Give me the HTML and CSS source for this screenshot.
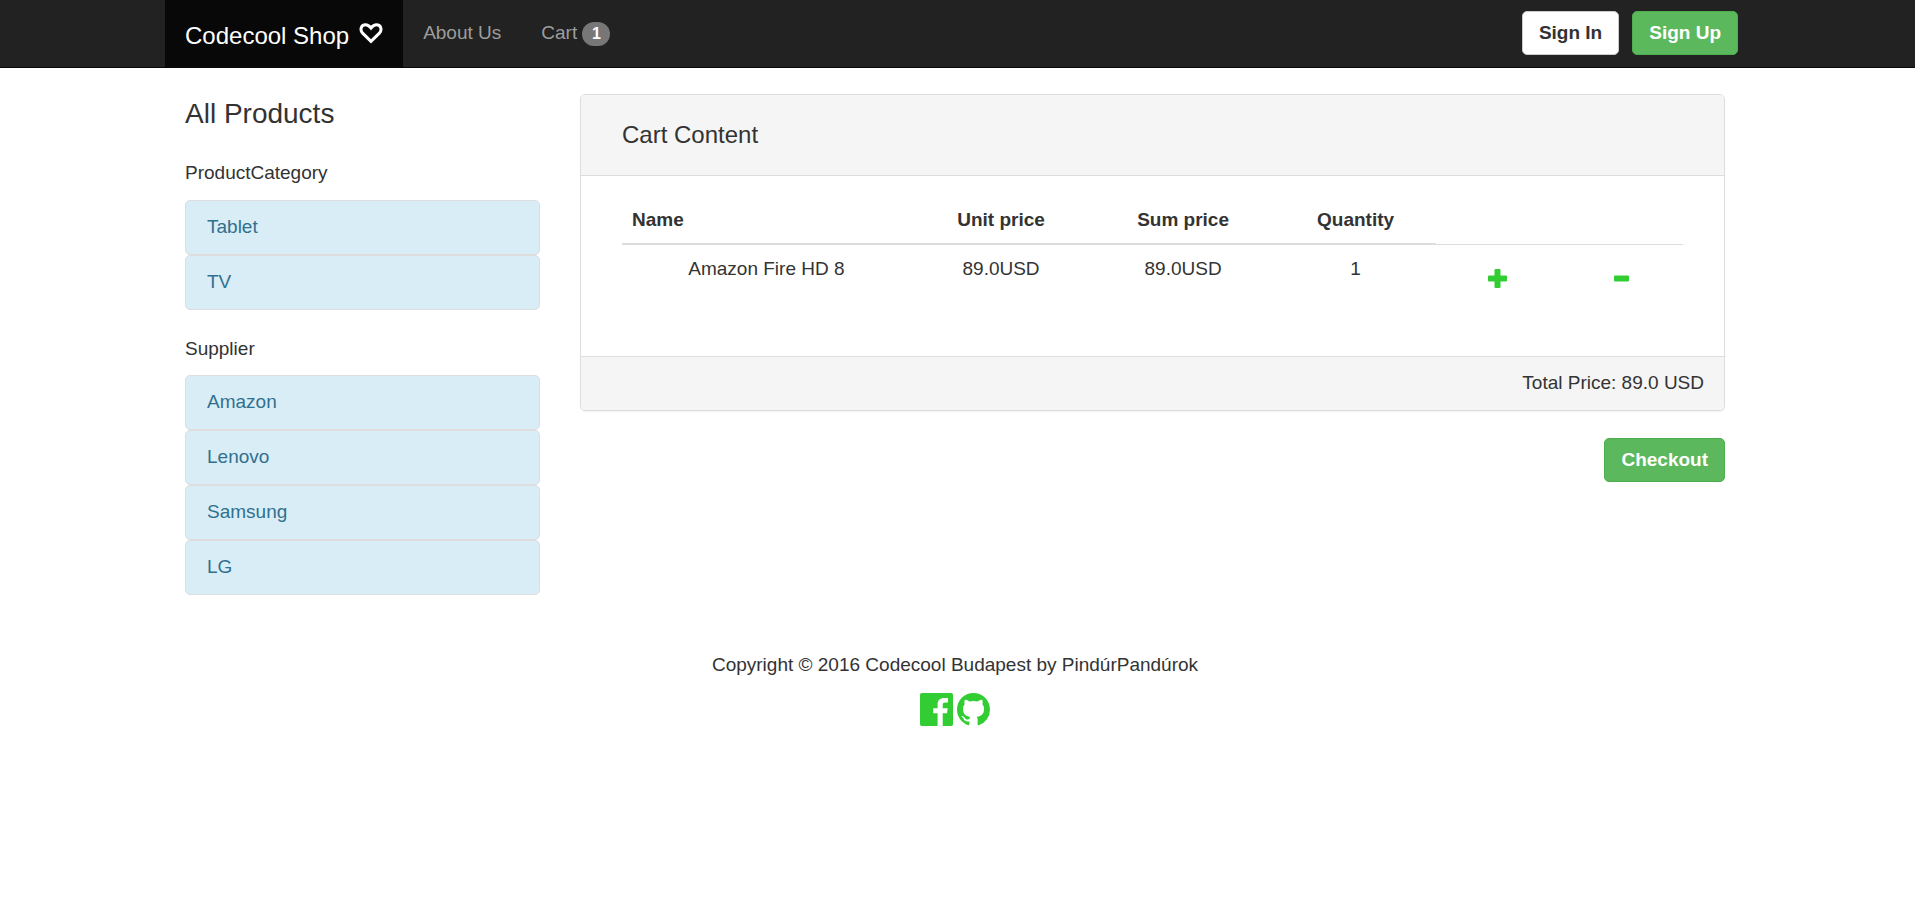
FILE: index.html
```html
<!DOCTYPE html>
<html lang="en">
<head>
<meta charset="utf-8">
<meta name="viewport" content="width=device-width, initial-scale=1">
<title>Codecool Shop</title>
<link rel="stylesheet" href="styles.css">
</head>
<body>
<header class="navbar">
  <div class="container navbar-inner">
    <a class="brand" href="#">Codecool Shop
      <svg class="heart" viewBox="0 0 24 21" aria-hidden="true"><path d="M12 18.300 L3.600 10.200 C0.800 7.100 1.700 1.800 6.600 1.800 C9.200 1.800 10.700 3.400 12 5 C13.300 3.400 14.800 1.800 17.400 1.800 C22.300 1.800 23.200 7.100 20.400 10.200 Z"/></svg>
    </a>
    <nav class="nav">
      <a class="nav-link" href="#">About Us</a>
      <a class="nav-link" href="#">Cart <span class="badge">1</span></a>
    </nav>
    <div class="nav-actions">
      <button class="btn btn-default" type="button">Sign In</button>
      <button class="btn btn-success" type="button">Sign Up</button>
    </div>
  </div>
</header>
<div class="page">
  <div class="container layout">
    <aside class="sidebar">
      <h1 class="sidebar-title">All Products</h1>
      <h2 class="group-title">ProductCategory</h2>
      <ul class="list">
        <li><a class="list-link" href="#">Tablet</a></li>
        <li><a class="list-link" href="#">TV</a></li>
      </ul>
      <h2 class="group-title">Supplier</h2>
      <ul class="list">
        <li><a class="list-link" href="#">Amazon</a></li>
        <li><a class="list-link" href="#">Lenovo</a></li>
        <li><a class="list-link" href="#">Samsung</a></li>
        <li><a class="list-link" href="#">LG</a></li>
      </ul>
    </aside>
    <main class="content">
      <section class="panel">
        <h2 class="panel-heading">Cart Content</h2>
        <div class="panel-body">
          <table class="cart">
            <colgroup>
              <col class="col-name"><col class="col-unit"><col class="col-sum"><col class="col-quantity"><col class="col-action"><col class="col-action">
            </colgroup>
            <thead>
              <tr><th class="name" scope="col">Name</th><th scope="col">Unit price</th><th scope="col">Sum price</th><th scope="col">Quantity</th></tr>
            </thead>
            <tbody>
              <tr>
                <td>Amazon Fire HD 8</td><td>89.0USD</td><td>89.0USD</td><td>1</td>
                <td><button class="icon-btn" type="button" aria-label="Add one"><svg class="sign" viewBox="0 0 19 19" aria-hidden="true"><path d="M7.500 0h4q1 0 1 1v5.500h5.500q1 0 1 1v4q0 1-1 1h-5.500v5.500q0 1-1 1h-4q-1 0-1-1v-5.500h-5.500q-1 0-1-1v-4q0-1 1-1h5.500v-5.500q0-1 1-1z"/></svg></button></td>
                <td><button class="icon-btn" type="button" aria-label="Remove one"><svg class="sign" viewBox="0 0 19 19" aria-hidden="true"><rect x="2" y="6.500" width="15" height="6" rx="1"/></svg></button></td>
              </tr>
            </tbody>
          </table>
        </div>
        <div class="panel-footer">Total Price: 89.0 USD</div>
      </section>
      <div class="checkout"><button class="btn btn-success" type="button">Checkout</button></div>
    </main>
  </div>
  <footer class="footer">
    <p class="copyright">Copyright © 2016 Codecool Budapest by PindúrPandúrok</p>
    <div class="social">
      <a class="social-link" href="#" aria-label="Facebook"><svg viewBox="0 0 33 33" aria-hidden="true"><path d="M1.800 0H31.200Q33 0 33 1.800V31.200Q33 33 31.200 33H22.700V20.200H27L27.700 15.200H22.700V12C22.700 10.500 23.100 9.500 25.200 9.500H27.900V5.100C27.400 5 25.800 4.900 24 4.900C20.100 4.900 17.600 7.200 17.600 11.500V15.200H13.200V20.200H17.600V33H1.800Q0 33 0 31.200V1.800Q0 0 1.800 0Z"/></svg></a>
      <a class="social-link" href="#" aria-label="GitHub"><svg viewBox="0 0 16 16" aria-hidden="true"><path d="M8 0C3.580 0 0 3.580 0 8c0 3.540 2.290 6.530 5.470 7.590.4.070.55-.17.55-.38 0-.19-.01-.82-.01-1.490-2.010.37-2.530-.49-2.690-.94-.09-.23-.48-.94-.82-1.130-.28-.15-.68-.52-.01-.53.63-.01 1.080.58 1.230.82.72 1.210 1.870.87 2.330.66.07-.52.28-.87.51-1.070-1.780-.2-3.640-.89-3.640-3.950 0-.87.31-1.590.82-2.150-.08-.2-.36-1.020.08-2.120 0 0 .67-.21 2.200.82.64-.18 1.320-.27 2-.27s1.360.09 2 .27c1.530-1.040 2.200-.82 2.200-.82.44 1.100.16 1.920.08 2.120.51.56.82 1.270.82 2.150 0 3.070-1.870 3.750-3.650 3.950.29.25.54.73.54 1.480 0 1.070-.01 1.930-.01 2.200 0 .21.15.46.55.38A8.010 8.010 0 0 0 16 8c0-4.420-3.580-8-8-8z"/></svg></a>
    </div>
  </footer>
</div>
</body>
</html>
```
FILE: styles.css
```css
*, *::before, *::after { box-sizing: border-box; }

body {
  margin: 0;
  background: #fff;
  color: #333;
  font-family: "Liberation Sans", Arial, sans-serif;
  font-size: 19px;
  line-height: 27px;
}

a { text-decoration: none; }
h1, h2, p, ul { margin: 0; padding: 0; font-weight: 400; }
ul { list-style: none; }
svg { display: block; }

.container { max-width: 1580px; margin: 0 auto; }

.navbar {
  padding-right: 5px;
  background: #222;
  border-bottom: 1px solid #080808;
}
.navbar-inner { display: flex; align-items: stretch; min-height: 67px; }
.brand {
  display: flex;
  align-items: center;
  gap: 10px;
  padding: 4px 20px 0;
  background: #080808;
  color: #fff;
  font-size: 24px;
}
.heart {
  width: 24px;
  height: 21px;
  margin-bottom: 4px;
  fill: none;
  stroke: #fff;
  stroke-width: 3;
}
.nav { display: flex; }
.nav-link {
  padding: 19px 20px;
  color: #9d9d9d;
}
.badge {
  display: inline-block;
  min-width: 28px;
  padding: 4px 9px;
  border-radius: 14px;
  background: #777;
  color: #fff;
  font-size: 16px;
  font-weight: 700;
  line-height: 16px;
  text-align: center;
}
.nav-actions {
  display: flex;
  align-items: center;
  gap: 13px;
  margin-left: auto;
  padding: 0 7px 2px 0;
}

.btn {
  padding: 7px 16px 8px;
  border: 1px solid;
  border-radius: 5px;
  font: inherit;
  font-weight: 700;
  cursor: pointer;
}
.btn-default { background: #fff; border-color: #ccc; color: #333; }
.btn-success { background: #5cb85c; border-color: #4cae4c; color: #fff; }

.page { padding: 26px 5px 0 0; }
.layout { display: grid; grid-template-columns: minmax(0, 1fr) minmax(0, 3fr); }
.sidebar { padding: 0 20px; }
.content { padding: 0 20px; }
.sidebar-title { padding-top: 3px; font-size: 28px; line-height: 34px; }
.group-title { padding: 28px 0 14px; font-size: 19px; }
.list + .group-title { padding-top: 25px; padding-bottom: 13px; }
.list-link {
  display: block;
  padding: 12px 21px 14px;
  border: 1px solid #ddd;
  border-radius: 5px;
  background: #d9edf7;
  color: #31708f;
}

.panel {
  overflow: hidden;
  border: 1px solid #ddd;
  border-radius: 5px;
  box-shadow: 0 1px 1px rgba(0, 0, 0, 0.05);
}
.panel-heading {
  padding: 26px 41px 27px;
  border-bottom: 1px solid #ddd;
  background: #f5f5f5;
  font-size: 24px;
}
.panel-body { padding: 20px 41px 27px; }
.panel-footer {
  padding: 12px 20px 14px;
  border-top: 1px solid #ddd;
  background: #f5f5f5;
  text-align: right;
}

.cart { width: 100%; table-layout: fixed; border-collapse: collapse; }
.cart th, .cart td { padding: 10px; text-align: center; vertical-align: top; }
.cart th { border-bottom: 2px solid #ddd; }
.cart th.name { text-align: left; }
.cart td { height: 85px; border-top: 1px solid #ddd; }
.col-name { width: 288px; }
.col-unit { width: 180px; }
.col-sum { width: 183px; }
.col-quantity { width: 161px; }
.col-action { width: 123px; }
.icon-btn {
  padding: 14px 0;
  border: 0;
  background: none;
  cursor: pointer;
}
.sign { width: 19px; height: 19px; fill: #32cd32; }

.checkout { display: flex; justify-content: flex-end; padding-top: 27px; }

.footer { padding-top: 56px; text-align: center; }
.social { display: flex; justify-content: center; gap: 4px; padding-top: 15px; }
.social-link { width: 33px; height: 33px; fill: #32cd32; }
```
